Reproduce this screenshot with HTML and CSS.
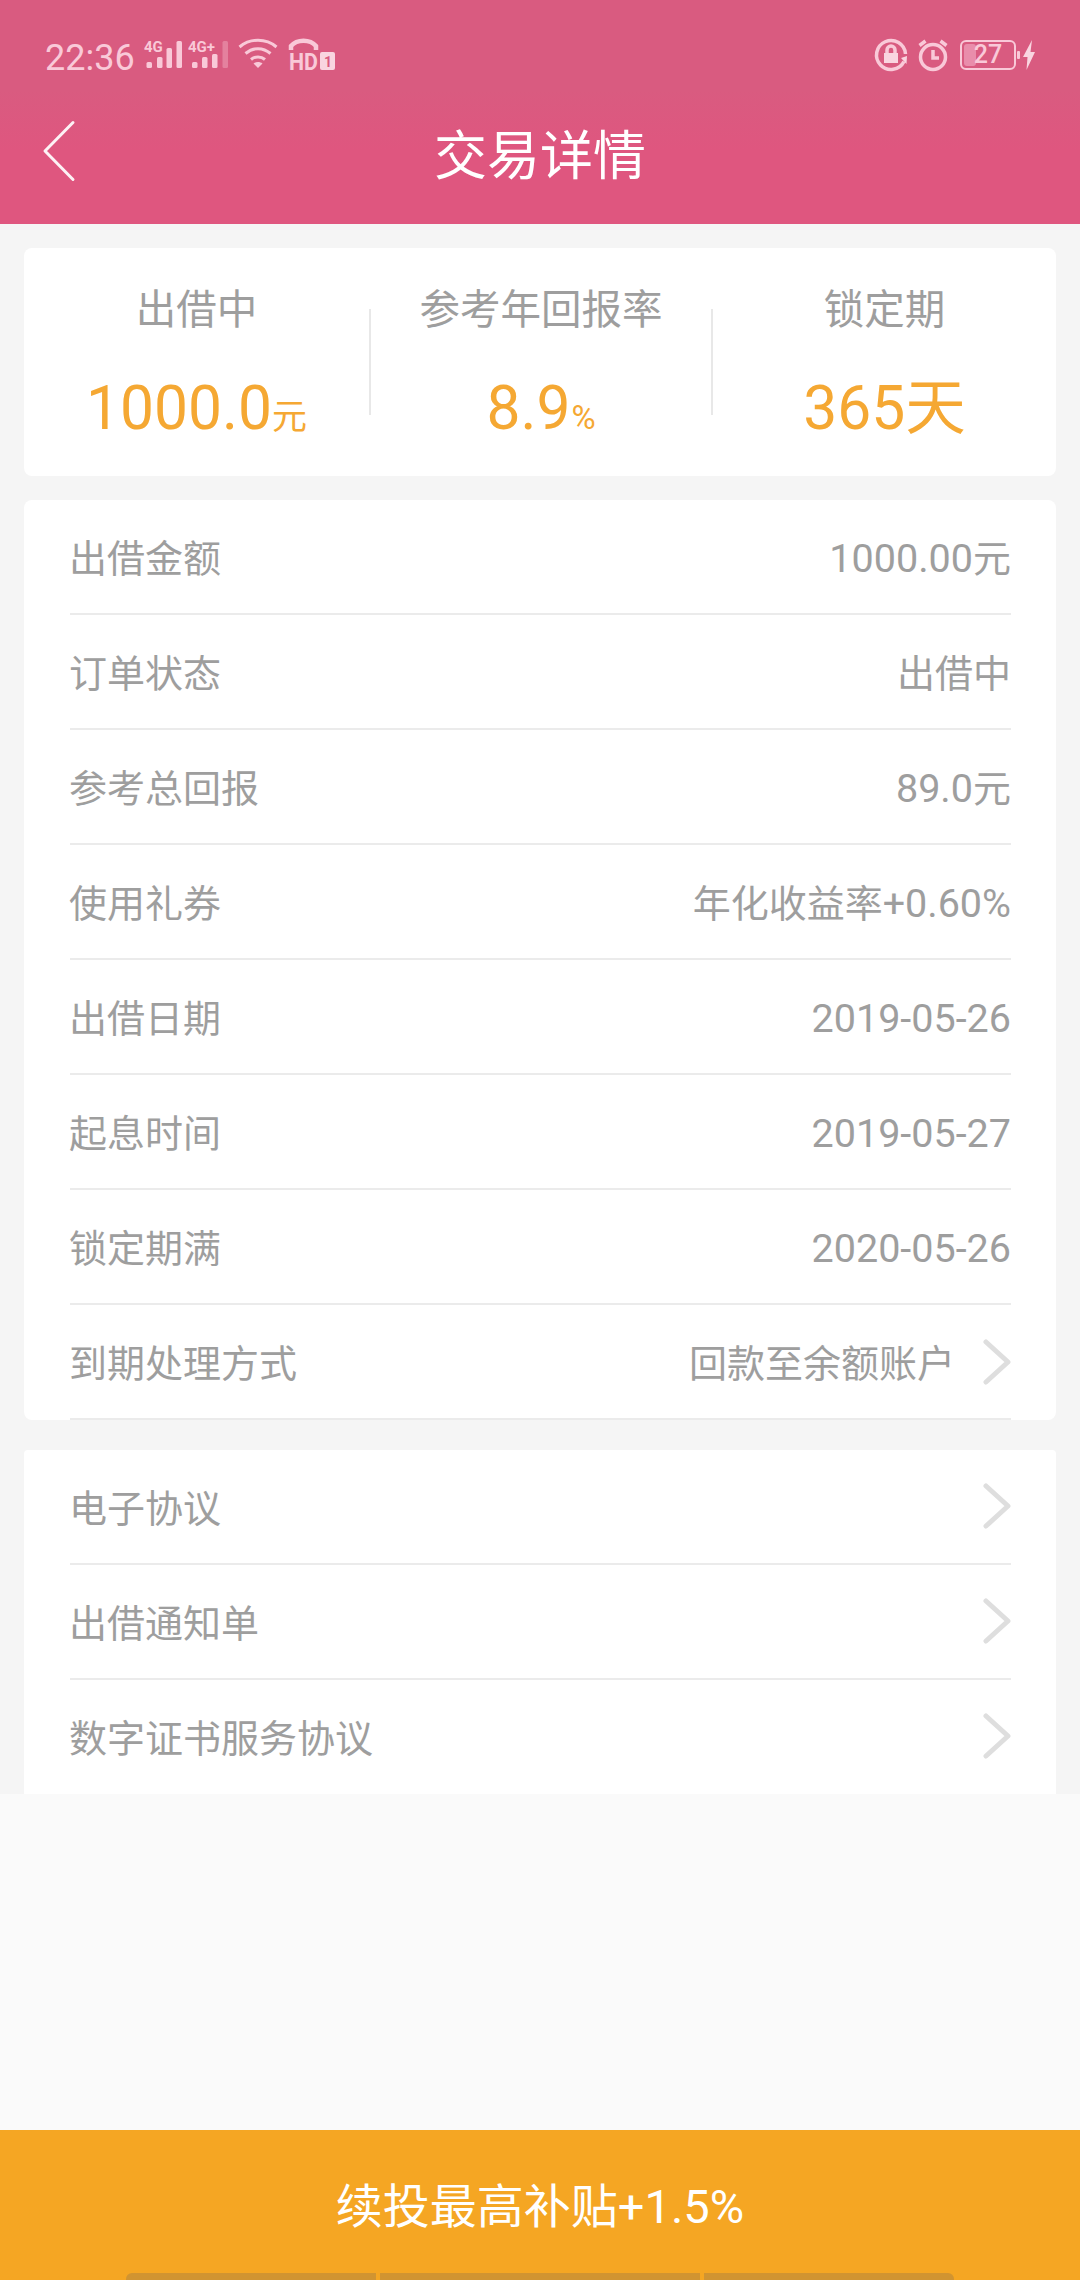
FILE: index.html
```html
<!DOCTYPE html>
<html lang="zh">
<head>
<meta charset="utf-8">
<title>交易详情</title>
<link rel="stylesheet" href="styles.css">
</head>
<body>
<div class="page">
  <header class="header">
    <div class="status">
      <div class="status-left">
        <span class="time">22:36</span>
        <svg class="sig1" width="38" height="32" viewBox="0 0 38 32"><text x="0" y="14" class="net">4G</text><rect x="2.500" y="24" width="5.500" height="6" rx="1.500"/><rect x="13" y="19" width="5.500" height="11" rx="1.500"/><rect x="22.500" y="10" width="5.500" height="20" rx="1.500"/><rect x="32.500" y="3" width="5.500" height="27" rx="1.500"/></svg>
        <svg class="sig2" width="40" height="32" viewBox="0 0 40 32"><text x="0" y="14" class="net">4G+</text><rect x="4" y="24" width="5.500" height="6" rx="1.500"/><rect x="14" y="19" width="5.500" height="11" rx="1.500"/><rect x="24" y="16" width="5.500" height="14" rx="1.500"/><rect x="34.500" y="3" width="5.500" height="27" rx="1.500" opacity=".35"/></svg>
        <svg class="wifi" width="40" height="32" viewBox="0 0 40 32"><path d="M1.500 9C12 0 28 0 38.500 9"/><path d="M7.500 15.500C15 9 25 9 32.500 15.500"/><path d="M13 21.500C17 18 23 18 27 21.500"/><path class="wifi-dot" d="M20 30l-4.500-4.500c2.500-2 6.500-2 9 0z"/></svg>
        <svg class="hd" width="46" height="32" viewBox="0 0 46 32"><path class="arc" d="M2 12V8C8 1 21 1 27 8v4"/><text x="0" y="32" class="hd-text" textLength="29" lengthAdjust="spacingAndGlyphs">HD</text><rect class="fill" x="31" y="14" width="15" height="18" rx="2"/><text x="35" y="29" class="sim">1</text></svg>
      </div>
      <div class="status-right">
        <svg class="lock" width="32" height="32" viewBox="0 0 32 32"><path class="ring" d="M29 22.500A14.500 14.500 0 1 1 30.500 15"/><path class="fill" d="M26 19l6-2-.5 8z"/><rect class="fill" x="9" y="14" width="14" height="10"/><path class="ring" d="M12 14v-3a4 4 0 0 1 8 0v3"/></svg>
        <svg class="alarm" width="30" height="32" viewBox="0 0 30 32"><circle class="ring" cx="15" cy="18" r="12.500"/><path class="ring" d="M15 11v8h6M1.500 6.500l6-4.500M28.500 6.500l-6-4.500"/></svg>
        <div class="battery"><span class="level"></span><span class="pct">27</span></div>
        <span class="nub"></span>
        <svg class="bolt" width="12" height="30" viewBox="0 0 12 30"><path class="fill" d="M9 0L0 17h4.500l-1 13L12 12H7.500z"/></svg>
      </div>
    </div>
    <div class="nav">
      <svg class="back" width="34" height="62" viewBox="0 0 34 62"><path d="M31 2.500L3 31l28 28.500"/></svg>
      <h1 class="title">交易详情</h1>
    </div>
  </header>

  <section class="card summary">
    <div class="col col-a"><div class="col-label">出借中</div><div class="col-value">1000.0<small>元</small></div></div>
    <span class="vline"></span>
    <div class="col col-b"><div class="col-label">参考年回报率</div><div class="col-value">8.9<small class="pc">%</small></div></div>
    <span class="vline"></span>
    <div class="col col-c"><div class="col-label">锁定期</div><div class="col-value">365天</div></div>
  </section>

  <section class="card list details">
    <div class="row"><span class="key">出借金额</span><span><span class="num">1000.00</span>元</span></div>
    <div class="row"><span class="key">订单状态</span><span>出借中</span></div>
    <div class="row"><span class="key">参考总回报</span><span><span class="num">89.0</span>元</span></div>
    <div class="row"><span class="key">使用礼券</span><span>年化收益率<span class="num">+0.60%</span></span></div>
    <div class="row"><span class="key">出借日期</span><span class="num">2019-05-26</span></div>
    <div class="row"><span class="key">起息时间</span><span class="num">2019-05-27</span></div>
    <div class="row"><span class="key">锁定期满</span><span class="num">2020-05-26</span></div>
    <div class="row"><span class="key">到期处理方式</span><span class="with-chev"><span>回款至余额账户</span><svg class="chev" width="28" height="46" viewBox="0 0 28 46"><path d="M3 3l22 20L3 43"/></svg></span></div>
  </section>

  <section class="card list links">
    <div class="row"><span class="key">电子协议</span><svg class="chev" width="28" height="46" viewBox="0 0 28 46"><path d="M3 3l22 20L3 43"/></svg></div>
    <div class="row"><span class="key">出借通知单</span><svg class="chev" width="28" height="46" viewBox="0 0 28 46"><path d="M3 3l22 20L3 43"/></svg></div>
    <div class="row last"><span class="key">数字证书服务协议</span><svg class="chev" width="28" height="46" viewBox="0 0 28 46"><path d="M3 3l22 20L3 43"/></svg></div>
  </section>

  <div class="spacer"></div>

  <footer class="cta">
    <div class="cta-text">续投最高补贴+1.5%</div>
    <div class="handle"><span></span><span></span><span></span></div>
  </footer>
</div>
</body>
</html>
```

FILE: styles.css
```css
* { box-sizing: border-box; }
html, body { margin: 0; padding: 0; }
body { width: 1080px; height: 2280px; overflow: hidden; font-family: Roboto, "Noto Sans CJK SC", sans-serif; color: #9e9e9e; }
.page { width: 1080px; height: 2280px; display: flex; flex-direction: column; background: #f5f5f5; }

.header { height: 224px; flex: none; background: linear-gradient(#d95b80 0, #d95b80 90px, #df567f 150px); color: #fff; }
.status { height: 110px; padding: 38px 45px 0; display: flex; justify-content: space-between; align-items: flex-start; color: #f9c9d8; fill: #f9c9d8; }
.status-left, .status-right { display: flex; align-items: flex-start; height: 32px; }
.status-left svg, .status-right svg { flex: none; overflow: visible; }
.time { width: 99px; font-size: 36px; line-height: 36px; padding-top: 2px; }
.sig1 { margin-right: 6px; }
.sig2 { margin-right: 10px; }
.wifi { margin-right: 11px; }
.net { font: 700 15px Roboto, sans-serif; }
.wifi path { fill: none; stroke: #f9c9d8; stroke-width: 3; }
.wifi .wifi-dot { fill: #f9c9d8; stroke: none; }
.hd .arc { fill: none; stroke: #f9c9d8; stroke-width: 4.500; }
.hd-text { font: 700 23px Roboto, sans-serif; }
.sim { font: 700 14px Roboto, sans-serif; fill: #d95b80; }
.ring { fill: none; stroke: #f9c9d8; stroke-width: 3.500; }
.fill { fill: #f9d5e0; }
.lock { margin: 1px 11px 0 0; }
.alarm { margin: 1px 12px 0 0; }
.battery { position: relative; width: 56px; height: 30px; margin: 2px 1px 0 0; border: 2px solid #f9c9d8; border-radius: 6px; font-size: 25px; line-height: 26px; text-align: center; overflow: hidden; }
.level { position: absolute; left: 2px; top: 2px; bottom: 2px; width: 12px; background: #e98dab; border-radius: 3px; }
.pct { position: relative; font-weight: 500; }
.nub { width: 3px; height: 8px; margin: 13px 3px 0 0; background: #f9c9d8; border-radius: 1px; }
.bolt { margin-top: 2px; }

.nav { height: 114px; position: relative; display: flex; align-items: flex-start; justify-content: center; }
.back { position: absolute; left: 42px; top: 10px; }
.back path { fill: none; stroke: #fff; stroke-width: 3; stroke-linecap: round; stroke-linejoin: round; opacity: .92; }
.title { margin: 17px 0 0; font-weight: 400; font-size: 53px; line-height: 60px; color: #fff; }

.card { background: #fff; margin: 0 24px; width: 1032px; flex: none; }
.summary { margin-top: 24px; height: 228px; border-radius: 8px; display: flex; align-items: center; }
.col { text-align: center; height: 228px; }
.col-a { width: 345px; }
.col-b { width: 340px; }
.col-c { flex: 1; }
.col-label { font-size: 40.500px; line-height: 50px; margin-top: 37px; }
.col-value { font-size: 60.500px; line-height: 80px; margin-top: 34px; color: #f5a833; }
.col-value small { font-size: 35px; }
.col-value small.pc { font-size: 33px; margin-left: 1px; }
.vline { width: 2px; height: 106px; background: #e8e8e8; flex: none; }

.list { padding: 0 45px 0 46px; }
.details { margin-top: 24px; height: 920px; border-radius: 8px; }
.links { margin-top: 30px; height: 344px; border-radius: 4px 4px 0 0; }
.row { height: 115px; display: flex; justify-content: space-between; align-items: center; border-bottom: 2px solid #ebebeb; font-size: 38px; line-height: 48px; padding-top: 4px; }
.key { margin-left: -1px; }
.num { font-size: 39.500px; }
.links .row.last { border-bottom: 0; height: 114px; }
.with-chev { display: flex; align-items: center; gap: 28px; }
.with-chev .chev { margin-top: -4px; }
.chev { flex: none; margin-top: -6px; }
.chev path { fill: none; stroke: #dedede; stroke-width: 5; stroke-linecap: round; stroke-linejoin: round; }

.spacer { flex: 1; background: #fafafa; }

.cta { height: 150px; flex: none; background: #f5a623; position: relative; display: flex; justify-content: center; }
.cta-text { color: #fff; font-size: 47px; line-height: 60px; margin-top: 47px; }
.handle { position: absolute; left: 126px; width: 828px; bottom: 0; height: 7px; display: flex; gap: 4px; }
.handle span { background: #d19431; height: 7px; flex: 320; }
.handle span:first-child { flex: 250; border-radius: 6px 0 0 0; }
.handle span:last-child { flex: 250; border-radius: 0 6px 0 0; }
```
